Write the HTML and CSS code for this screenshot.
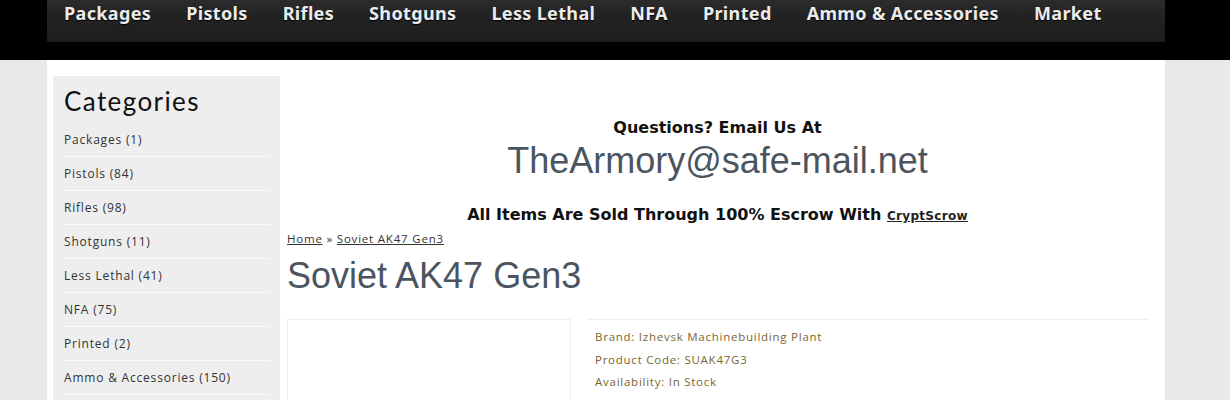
FILE: index.html
```html
<!DOCTYPE html>
<html>
<head>
<meta charset="utf-8">
<title>The Armory</title>
<link rel="stylesheet" href="styles.css">
</head>
<body>
<div class="topband">
  <nav class="nav">
    <a>Packages</a><a>Pistols</a><a>Rifles</a><a>Shotguns</a><a>Less Lethal</a><a>NFA</a><a>Printed</a><a>Ammo &amp; Accessories</a><a>Market</a>
  </nav>
</div>
<div class="page">
  <aside class="sidebar">
    <h2 class="side-title">Categories</h2>
    <ul class="cats">
      <li>Packages (1)</li>
      <li>Pistols (84)</li>
      <li>Rifles (98)</li>
      <li>Shotguns (11)</li>
      <li>Less Lethal (41)</li>
      <li>NFA (75)</li>
      <li>Printed (2)</li>
      <li>Ammo &amp; Accessories (150)</li>
    </ul>
  </aside>
  <main class="main">
    <div class="notice">
      <div class="q">Questions? Email Us At</div>
      <div class="email">TheArmory@safe-mail.net</div>
      <div class="escrow">All Items Are Sold Through 100% Escrow With <a class="cs">CryptScrow</a></div>
    </div>
    <div class="crumbs"><a>Home</a> » <a>Soviet AK47 Gen3</a></div>
    <h1 class="title">Soviet AK47 Gen3</h1>
    <div class="product">
      <div class="image"></div>
      <div class="info">
        <div class="row">Brand: Izhevsk Machinebuilding Plant</div>
        <div class="row">Product Code: SUAK47G3</div>
        <div class="row">Availability: In Stock</div>
      </div>
    </div>
  </main>
</div>
</body>
</html>
```
FILE: styles.css
```css
html, body { margin: 0; padding: 0; }
body {
  background: #e9e9e9;
  font-family: "Open Sans", "Liberation Sans", sans-serif;
  height: 400px;
  overflow: hidden;
}
.topband {
  background: #000;
  height: 60px;
  padding-left: 47px;
}
.nav {
  width: 1118px;
  height: 42px;
  box-sizing: border-box;
  background: linear-gradient(#2c2c2c 0, #232323 35%, #1d1d1d 100%);
  display: flex;
  gap: 35px;
  padding-left: 17px;
  align-items: flex-start;
}
.nav a {
  color: #ececec;
  font-family: "Noto Sans", "Liberation Sans", sans-serif;
  font-weight: 700;
  font-size: 18px;
  line-height: 27px;
  letter-spacing: 0.35px;
  text-shadow: 0 1px 1px #000;
  white-space: nowrap;
}
.page {
  margin-left: 47px;
  width: 1118px;
  background: #fff;
  display: flex;
  padding-top: 16px;
  height: 340px;
  box-sizing: border-box;
  overflow: hidden;
}
.sidebar {
  margin-left: 6px;
  width: 227px;
  background: #eeeeee;
  padding: 12px 11px 0 11px;
  box-sizing: border-box;
}
.side-title {
  margin: 0;
  font-family: "Lato", sans-serif;
  font-weight: 400;
  font-size: 26px;
  line-height: 26px;
  color: #111;
  letter-spacing: 1.4px;
}
.cats {
  list-style: none;
  margin: 9px 0 0 0;
  padding: 0;
}
.cats li {
  font-size: 12px;
  letter-spacing: 0.8px;
  color: #333;
  padding-top: 6px;
  height: 27px;
  line-height: 22px;
  border-bottom: 1px solid #fafafa;
}
.main {
  flex: 1;
  padding: 0 17px 0 7px;
}
.notice {
  text-align: center;
  padding-top: 42px;
}
.q {
  font-family: "DejaVu Sans", sans-serif;
  font-weight: 700;
  font-size: 16px;
  line-height: 20px;
  color: #111;
}
.email {
  font-family: "Liberation Sans", sans-serif;
  font-size: 36px;
  line-height: 40px;
  color: #4a5560;
  margin-top: 3px;
}
.escrow {
  font-family: "DejaVu Sans", sans-serif;
  font-weight: 700;
  font-size: 16px;
  line-height: 20px;
  color: #111;
  margin-top: 24px;
}
.cs {
  font-size: 12px;
  letter-spacing: 0.3px;
  text-decoration: underline;
  color: #222;
}
.crumbs {
  font-size: 11.5px;
  letter-spacing: 0.8px;
  line-height: 14px;
  color: #333;
  margin-top: 6px;
}
.crumbs a { text-decoration: underline; }
.title {
  margin: 9px 0 0 0;
  font-family: "Liberation Sans", sans-serif;
  font-weight: 400;
  font-size: 36px;
  line-height: 42px;
  color: #4a5560;
}
.product {
  display: flex;
  margin-top: 22px;
  gap: 17px;
}
.image {
  width: 284px;
  height: 81px;
  border: 1px solid #eeeeee;
  border-bottom: 0;
  box-sizing: border-box;
}
.info {
  flex: 1;
  border-top: 1px solid #eeeeee;
  padding: 6px 7px 0;
}
.row {
  font-size: 11.5px;
  letter-spacing: 0.75px;
  line-height: 22.5px;
  color: #7a6530;
}
```
